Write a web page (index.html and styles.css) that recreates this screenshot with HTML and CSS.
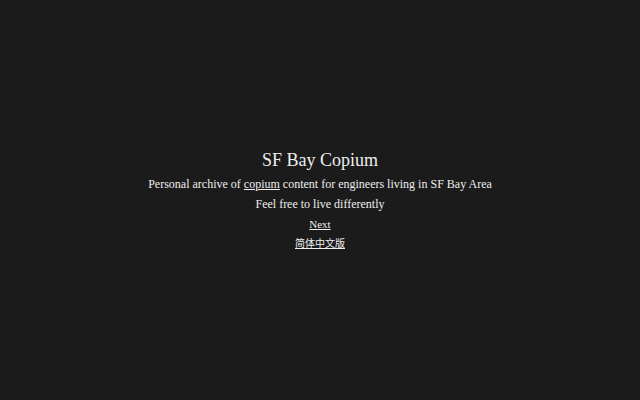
FILE: index.html
```html
<!DOCTYPE html>
<html>
<head>
<meta charset="utf-8">
<link rel="stylesheet" href="styles.css">
</head>
<body>
<main class="page">
  <h1 class="title">SF Bay Copium</h1>
  <p class="line">Personal archive of <a href="#">copium</a> content for engineers living in SF Bay Area</p>
  <p class="line">Feel free to live differently</p>
  <p class="link small"><a href="#">Next</a></p>
  <p class="link cjk"><a href="#">简体中文版</a></p>
</main>
</body>
</html>
```
FILE: styles.css
```css
html, body {
  margin: 0;
  padding: 0;
  height: 100%;
  background: #1b1b1b;
}
body {
  color: #eeeeee;
  font-family: "Liberation Serif", "Times New Roman", serif;
}
.page {
  height: 100%;
  display: flex;
  flex-direction: column;
  align-items: center;
  justify-content: center;
  text-align: center;
}
.title {
  font-size: 18px;
  font-weight: normal;
  margin: 0;
  line-height: 28px;
}
.line {
  font-size: 12px;
  margin: 0;
  line-height: 20px;
}
.link {
  margin: 0;
  line-height: 20px;
}
.small {
  font-size: 11px;
}
.cjk {
  font-size: 10px;
  font-family: "Liberation Serif", "Noto Sans CJK SC", serif;
}
a {
  color: #eeeeee;
}
```
